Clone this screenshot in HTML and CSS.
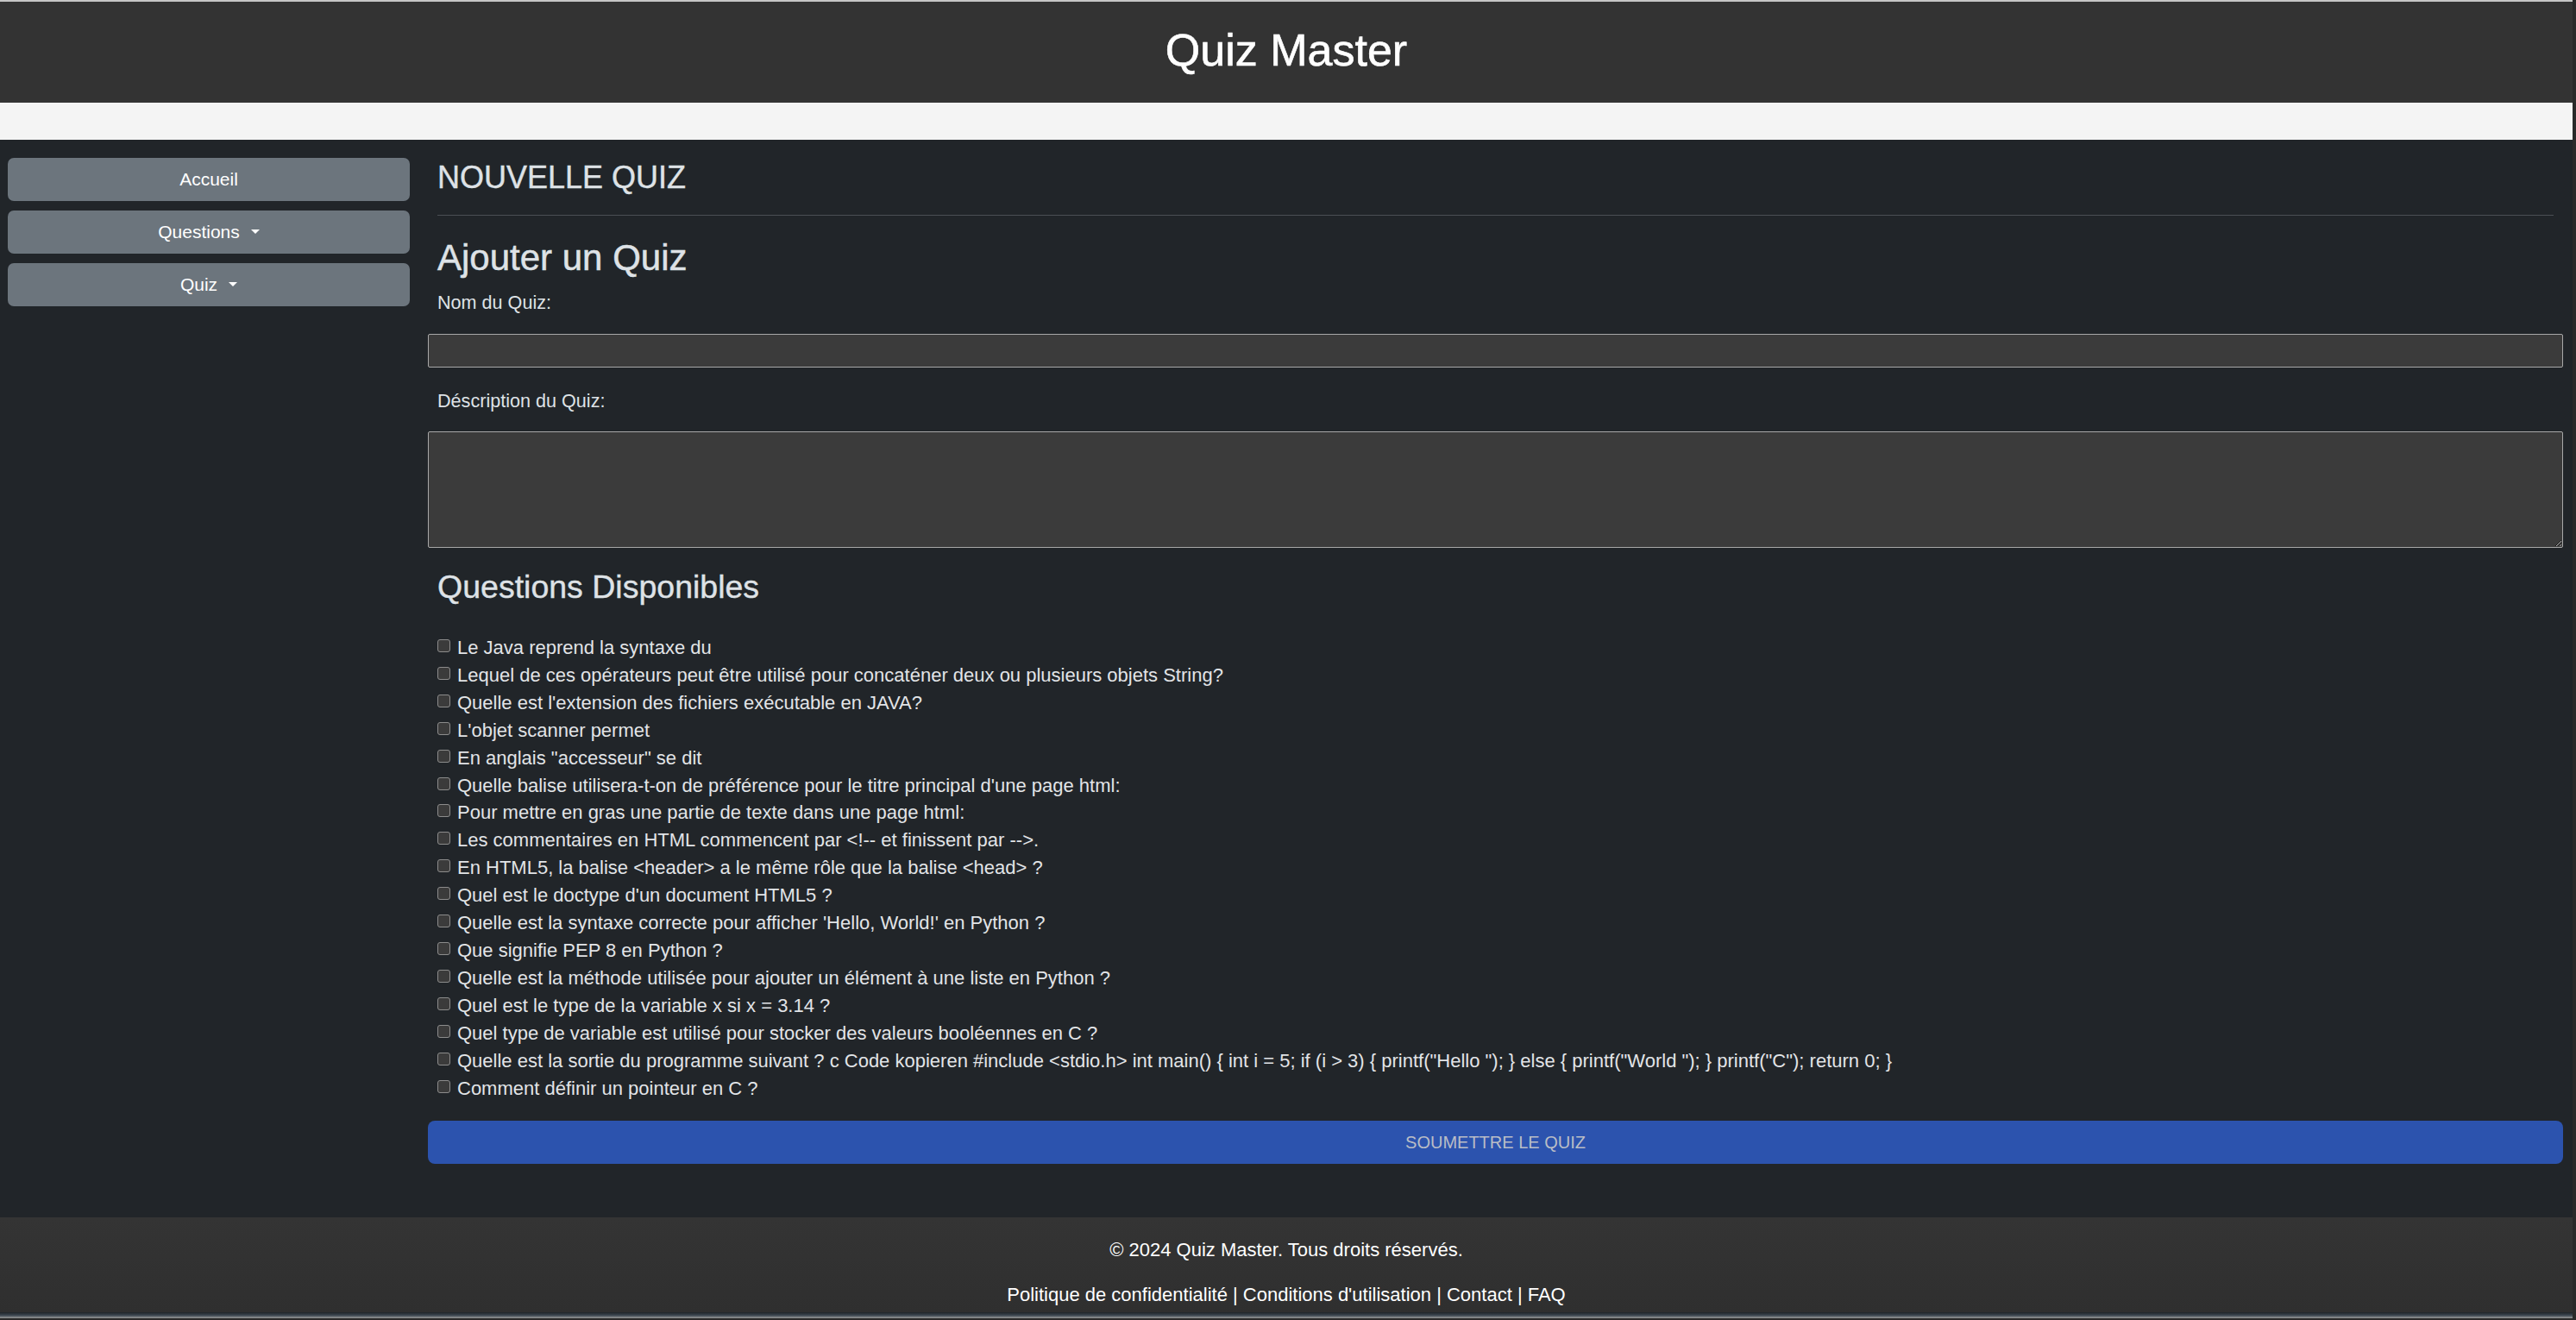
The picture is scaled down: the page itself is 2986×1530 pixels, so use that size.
FILE: index.html
```html
<!DOCTYPE html>
<html lang="fr">
<head>
<meta charset="utf-8">
<title>Quiz Master</title>
<link rel="stylesheet" href="styles.css">
</head>
<body>
<div class="frame">
  <div class="topline"></div>
  <header class="site-header">
    <h1 class="site-title">Quiz Master</h1>
  </header>
  <div class="band"></div>
  <main class="layout">
    <nav class="sidebar">
      <a class="side-btn" href="#">Accueil</a>
      <a class="side-btn dropdown" href="#">Questions</a>
      <a class="side-btn dropdown" href="#">Quiz</a>
    </nav>
    <section class="content">
      <h2 class="page-title">NOUVELLE QUIZ</h2>
      <hr class="divider">
      <h3 class="form-title">Ajouter un Quiz</h3>
      <form class="quiz-form">
        <label class="field-label" for="nom">Nom du Quiz:</label>
        <input class="field-input" id="nom" type="text">
        <label class="field-label label-desc" for="desc">Déscription du Quiz:</label>
        <textarea class="field-area" id="desc"></textarea>
        <h4 class="questions-title">Questions Disponibles</h4>
        <ul class="question-list">
          <li class="question"><input class="check" type="checkbox"><span>Le Java reprend la syntaxe du</span></li>
          <li class="question"><input class="check" type="checkbox"><span>Lequel de ces opérateurs peut être utilisé pour concaténer deux ou plusieurs objets String?</span></li>
          <li class="question"><input class="check" type="checkbox"><span>Quelle est l'extension des fichiers exécutable en JAVA?</span></li>
          <li class="question"><input class="check" type="checkbox"><span>L'objet scanner permet</span></li>
          <li class="question"><input class="check" type="checkbox"><span>En anglais "accesseur" se dit</span></li>
          <li class="question"><input class="check" type="checkbox"><span>Quelle balise utilisera-t-on de préférence pour le titre principal d'une page html:</span></li>
          <li class="question"><input class="check" type="checkbox"><span>Pour mettre en gras une partie de texte dans une page html:</span></li>
          <li class="question"><input class="check" type="checkbox"><span>Les commentaires en HTML commencent par &lt;!-- et finissent par --&gt;.</span></li>
          <li class="question"><input class="check" type="checkbox"><span>En HTML5, la balise &lt;header&gt; a le même rôle que la balise &lt;head&gt; ?</span></li>
          <li class="question"><input class="check" type="checkbox"><span>Quel est le doctype d'un document HTML5 ?</span></li>
          <li class="question"><input class="check" type="checkbox"><span>Quelle est la syntaxe correcte pour afficher 'Hello, World!' en Python ?</span></li>
          <li class="question"><input class="check" type="checkbox"><span>Que signifie PEP 8 en Python ?</span></li>
          <li class="question"><input class="check" type="checkbox"><span>Quelle est la méthode utilisée pour ajouter un élément à une liste en Python ?</span></li>
          <li class="question"><input class="check" type="checkbox"><span>Quel est le type de la variable x si x = 3.14 ?</span></li>
          <li class="question"><input class="check" type="checkbox"><span>Quel type de variable est utilisé pour stocker des valeurs booléennes en C ?</span></li>
          <li class="question"><input class="check" type="checkbox"><span>Quelle est la sortie du programme suivant ? c Code kopieren #include &lt;stdio.h&gt; int main() { int i = 5; if (i &gt; 3) { printf("Hello "); } else { printf("World "); } printf("C"); return 0; }</span></li>
          <li class="question"><input class="check" type="checkbox"><span>Comment définir un pointeur en C ?</span></li>
        </ul>
        <button class="submit-btn" type="submit">SOUMETTRE LE QUIZ</button>
      </form>
    </section>
  </main>
  <footer class="site-footer">
    <p class="footer-line">© 2024 Quiz Master. Tous droits réservés.</p>
    <p class="footer-line footer-links">Politique de confidentialité | Conditions d'utilisation | Contact | FAQ</p>
  </footer>
  <div class="desk-strip"></div>
</div>
</body>
</html>
```

FILE: styles.css
```css
html, body {
  margin: 0;
  padding: 0;
}

body {
  background: #2a2a2a;
  font-family: "Liberation Sans", Arial, sans-serif;
  color: #dee2e6;
  width: 2986px;
  height: 1530px;
  overflow: hidden;
}

.frame {
  width: 2982px;
  display: flex;
  flex-direction: column;
}

.topline {
  height: 2px;
  background: #c6c6c6;
}

.site-header {
  height: 117px;
  box-sizing: border-box;
  padding-bottom: 5px;
  background: #333333;
  display: flex;
  justify-content: center;
  align-items: center;
}

.site-title {
  margin: 0;
  font-size: 52px;
  line-height: 112px;
  font-weight: 400;
  color: #ffffff;
  -webkit-text-stroke: 0.6px #ffffff;
}

.band {
  height: 43px;
  background: #f4f4f4;
}

.layout {
  background: #212529;
  display: flex;
  gap: 21px;
  padding: 21px 11px 62px 9px;
}

.sidebar {
  width: 466px;
  flex-shrink: 0;
  display: flex;
  flex-direction: column;
  gap: 11px;
}

.side-btn {
  display: block;
  height: 50px;
  line-height: 50px;
  background: #6c757d;
  border-radius: 7px;
  color: #ffffff;
  text-decoration: none;
  text-align: center;
  font-size: 21px;
}

.dropdown::after {
  content: "";
  display: inline-block;
  margin-left: 13px;
  vertical-align: 5px;
  border-top: 5px solid #ffffff;
  border-left: 5px solid transparent;
  border-right: 5px solid transparent;
}

.content {
  flex: 1;
  min-width: 0;
}

.page-title {
  margin: 1px 11px 0;
  font-size: 36px;
  line-height: 44px;
  font-weight: 400;
  color: #dee2e6;
  -webkit-text-stroke: 0.4px #dee2e6;
}

.divider {
  margin: 21px 11px 0;
  border: 0;
  border-top: 1px solid #4b4f54;
  height: 0;
}

.form-title {
  margin: 24px 11px 0;
  font-size: 42px;
  line-height: 50px;
  font-weight: 400;
  color: #dee2e6;
  -webkit-text-stroke: 0.5px #dee2e6;
}

.quiz-form {
  margin: 0;
}

.field-label {
  display: block;
  margin: 12px 11px 0;
  font-size: 21.6px;
  line-height: 30px;
  color: #dee2e6;
}

.label-desc {
  margin-top: 24px;
}

.field-input,
.field-area {
  display: block;
  width: 100%;
  box-sizing: border-box;
  background: #3b3b3b;
  border: 1px solid #a8a8a8;
  border-radius: 2px;
  color: #dee2e6;
  font-family: inherit;
  font-size: 21px;
  margin: 0;
}

.field-input {
  height: 39px;
  margin-top: 21px;
}

.field-area {
  height: 135px;
  margin-top: 20px;
}

.questions-title {
  margin: 22px 11px 0;
  font-size: 37.5px;
  line-height: 46px;
  font-weight: 400;
  color: #dee2e6;
  -webkit-text-stroke: 0.4px #dee2e6;
}

.question-list {
  list-style: none;
  margin: 32px 11px 0;
  padding: 0;
}

.question {
  display: flex;
  align-items: flex-start;
  font-size: 22px;
  line-height: 31.9px;
  color: #e2e4e7;
  white-space: nowrap;
}

.check {
  appearance: none;
  -webkit-appearance: none;
  width: 15px;
  height: 15px;
  margin: 6px 8px 0 0;
  flex-shrink: 0;
  box-sizing: border-box;
  background: #3b3b3b;
  border: 1px solid #8c8c8c;
  border-radius: 3px;
}

.submit-btn {
  display: block;
  width: 100%;
  height: 50px;
  margin-top: 22px;
  border: 0;
  border-radius: 8px;
  background: #2c53ae;
  color: #b9bdc6;
  font-family: inherit;
  font-size: 20px;
  line-height: 50px;
  padding: 0;
  text-align: center;
}

.site-footer {
  height: 110px;
  box-sizing: border-box;
  padding: 23px 0 5px;
  background: linear-gradient(#343434, #2f2f2f);
  text-align: center;
  color: #ffffff;
}

.footer-line {
  margin: 0;
  font-size: 22px;
  line-height: 30px;
}

.footer-links {
  margin-top: 22px;
}

.desk-strip {
  height: 7px;
  background: linear-gradient(#1f2428 0%, #3c4650 50%, #9a9a9a 100%);
}
```
